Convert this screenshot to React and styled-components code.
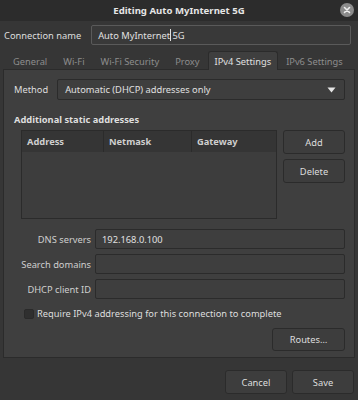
import React from "react";
import styled, { createGlobalStyle } from "styled-components";

const Global = createGlobalStyle`
  html, body { margin: 0; padding: 0; background: #353535; }
  body { font-family: "Noto Sans", "DejaVu Sans", sans-serif; font-size: 9.3px; color: #dedede; }
  * { box-sizing: border-box; }
`;

const Window = styled.div`
  width: 358px;
  height: 400px;
  background: #363636;
  display: flex;
  flex-direction: column;
  overflow: hidden;
`;

const TitleBar = styled.div`
  height: 21px;
  flex: none;
  background: #2c2c2c;
  display: flex;
  align-items: center;
  justify-content: center;
  position: relative;
  font-weight: bold;
  font-size: 9.6px;
  color: #e6e6e6;
`;

const Close = styled.div`
  position: absolute;
  right: 4px;
  top: 3px;
  width: 14px;
  height: 14px;
  border-radius: 50%;
  background: #8c8c8c;
  display: flex;
  align-items: center;
  justify-content: center;
`;

const NameRow = styled.div`
  display: flex;
  align-items: center;
  padding: 4px 7px 0 4px;
  gap: 10px;
`;

const Label = styled.span`
  white-space: nowrap;
  color: #dedede;
`;

const Entry = styled.div`
  flex: 1;
  height: 20px;
  border: 1px solid ${(p) => (p.$light ? "#5a5a5a" : "#2b2b2b")};
  border-radius: 2px;
  background: ${(p) => (p.$light ? "#393939" : "#3e3e3e")};
  display: flex;
  align-items: center;
  padding: 0 6px;
  color: #e0e0e0;
  white-space: pre;
`;

const Caret = styled.span`
  display: inline-block;
  width: 1px;
  height: 12px;
  background: #e0e0e0;
  margin-right: -1px;
`;

const Tabs = styled.div`
  display: flex;
  align-items: flex-end;
  height: 24px;
  flex: none;
  padding: 0 0 0 5px;
`;

const Tab = styled.div`
  height: 19px;
  padding: 0 ${(p) => (p.$active ? 6 : 7)}px;
  display: flex;
  align-items: center;
  color: ${(p) => (p.$active ? "#e0e0e0" : "#8d8d8d")};
  background: ${(p) => (p.$active ? "#3f3f3f" : "transparent")};
  border: 1px solid ${(p) => (p.$active ? "#2b2b2b" : "transparent")};
  border-bottom: none;
  border-radius: 3px 3px 0 0;
  margin-bottom: -1px;
  position: relative;
  z-index: 1;
  white-space: nowrap;
`;

const Panel = styled.div`
  margin: 0 3px;
  height: 289px;
  flex: none;
  background: #3f3f3f;
  border: 1px solid #2b2b2b;
  padding: 9px 9px 0 9px;
  display: flex;
  flex-direction: column;
`;

const MethodRow = styled.div`
  display: flex;
  align-items: center;
  gap: 9px;
  padding-left: 1px;
`;

const Combo = styled(Entry)`
  justify-content: space-between;
  padding: 0 8px 0 7px;
  height: 21px;
`;

const SectionTitle = styled.div`
  font-weight: bold;
  margin-top: 13px;
  padding-left: 1px;
`;

const StaticRow = styled.div`
  display: flex;
  gap: 6px;
  margin-top: 4px;
  padding-left: 8px;
`;

const Table = styled.div`
  width: 258px;
  height: 89px;
  border: 1px solid #2b2b2b;
  background: #3d3d3d;
`;

const THead = styled.div`
  display: grid;
  grid-template-columns: 82px 88px 1fr;
  height: 21px;
  background: #353535;
  font-weight: bold;
  color: #cfcfcf;
`;

const Th = styled.div`
  display: flex;
  align-items: center;
  padding-left: 5px;
  border-right: ${(p) => (p.$last ? "none" : "1px solid #2b2b2b")};
`;

const Buttons = styled.div`
  display: flex;
  flex-direction: column;
  gap: 5px;
  width: 62px;
`;

const Button = styled.div`
  width: ${(p) => p.$w || 62}px;
  height: ${(p) => p.$h || 24}px;
  border: 1px solid #2b2b2b;
  border-radius: 3px;
  background: #3d3d3d;
  display: flex;
  align-items: center;
  justify-content: center;
  color: #dedede;
`;

const Form = styled.div`
  display: grid;
  grid-template-columns: 78px 1fr;
  column-gap: 4px;
  row-gap: 5px;
  margin-top: 10px;
`;

const FormLabel = styled.div`
  display: flex;
  align-items: center;
  justify-content: flex-end;
  color: #cfcfcf;
  white-space: nowrap;
`;

const CheckRow = styled.div`
  display: flex;
  align-items: center;
  gap: 3px;
  margin-top: 8px;
  padding-left: 11px;
`;

const Box = styled.div`
  width: 10px;
  height: 10px;
  border-radius: 2px;
  background: #2f2f2f;
  border: 1px solid #2a2a2a;
`;

const RoutesRow = styled.div`
  display: flex;
  justify-content: flex-end;
  margin-top: 8px;
`;

const Footer = styled.div`
  display: flex;
  justify-content: flex-end;
  gap: 5px;
  padding: 12px 4px 0 0;
`;

export default function App() {
  return (
    <>
      <Global />
      <Window>
        <TitleBar>
          Editing Auto MyInternet 5G
          <Close>
            <svg width="8" height="8" viewBox="0 0 8 8">
              <path d="M1.5 1.5L6.5 6.5M6.5 1.5L1.5 6.5" stroke="#f0f0f0" strokeWidth="1.6" strokeLinecap="round" />
            </svg>
          </Close>
        </TitleBar>
        <NameRow>
          <Label>Connection name</Label>
          <Entry $light>
            {"Auto MyInternet"}<Caret />{" 5G"}
          </Entry>
        </NameRow>
        <Tabs>
          <Tab>General</Tab>
          <Tab>Wi-Fi</Tab>
          <Tab>Wi-Fi Security</Tab>
          <Tab>Proxy</Tab>
          <Tab $active>IPv4 Settings</Tab>
          <Tab>IPv6 Settings</Tab>
        </Tabs>
        <Panel>
          <MethodRow>
            <Label>Method</Label>
            <Combo>
              Automatic (DHCP) addresses only
              <svg width="9" height="6" viewBox="0 0 9 6">
                <path d="M0.5 0.5H8.5L4.5 5.5Z" fill="#e6e6e6" />
              </svg>
            </Combo>
          </MethodRow>
          <SectionTitle>Additional static addresses</SectionTitle>
          <StaticRow>
            <Table>
              <THead>
                <Th>Address</Th>
                <Th>Netmask</Th>
                <Th $last>Gateway</Th>
              </THead>
            </Table>
            <Buttons>
              <Button>Add</Button>
              <Button>Delete</Button>
            </Buttons>
          </StaticRow>
          <Form>
            <FormLabel>DNS servers</FormLabel>
            <Entry>192.168.0.100</Entry>
            <FormLabel>Search domains</FormLabel>
            <Entry />
            <FormLabel>DHCP client ID</FormLabel>
            <Entry />
          </Form>
          <CheckRow>
            <Box />
            <Label>Require IPv4 addressing for this connection to complete</Label>
          </CheckRow>
          <RoutesRow>
            <Button $w={73} $h={23}>Routes…</Button>
          </RoutesRow>
        </Panel>
        <Footer>
          <Button>Cancel</Button>
          <Button>Save</Button>
        </Footer>
      </Window>
    </>
  );
}
